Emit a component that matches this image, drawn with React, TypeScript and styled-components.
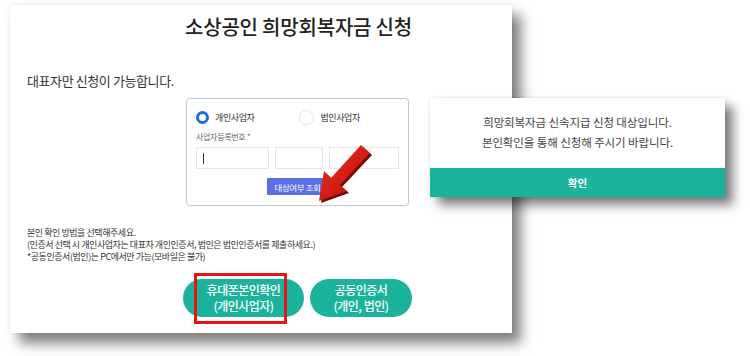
import React from "react";
import styled, { createGlobalStyle } from "styled-components";

const Global = createGlobalStyle`
  html, body { margin: 0; padding: 0; background: #ffffff; }
  body { font-family: "Noto Sans CJK KR", "Noto Sans", sans-serif; width: 750px; height: 356px; overflow: hidden; }
  * { box-sizing: border-box; }
`;

const Stage = styled.div`
  position: relative;
  width: 750px;
  height: 356px;
  padding: 5px 0 0 10px;
`;

const Card = styled.div`
  position: relative;
  width: 502px;
  height: 328px;
  background: #fff;
  box-shadow: 0 -1px 4px rgba(0, 0, 0, 0.08), 9px 10px 12px rgba(0, 0, 0, 0.5);
  display: flex;
  flex-direction: column;
  padding: 0 0 0 17px;
`;

const Title = styled.h1`
  margin: 8px 0 0 158px;
  font-size: 20px;
  font-weight: 500;
  color: #222;
  line-height: 28px;
  letter-spacing: -0.2px;
`;

const Lead = styled.p`
  margin: 31px 0 0 0;
  font-size: 13px;
  color: #333;
  line-height: 18px;
  letter-spacing: -0.4px;
`;

const FormBox = styled.div`
  margin: 8px 0 0 159px;
  width: 223px;
  height: 108px;
  border: 1px solid #b9cbe3;
  border-radius: 4px;
  padding: 8px 9px 0 9px;
  display: flex;
  flex-direction: column;
`;

const RadioRow = styled.div`
  display: flex;
  align-items: center;
  height: 20px;
`;

const RadioItem = styled.label<{ $w: number }>`
  display: flex;
  align-items: center;
  gap: 6px;
  width: ${(p) => p.$w}px;
  font-size: 9px;
  color: #333;
  letter-spacing: -0.4px;
`;

const RadioDot = styled.span<{ $on?: boolean }>`
  display: inline-block;
  width: ${(p) => (p.$on ? 13 : 15)}px;
  height: ${(p) => (p.$on ? 13 : 15)}px;
  border-radius: 50%;
  background: #fff;
  border: ${(p) => (p.$on ? "3.5px solid #1c6ed8" : "1px solid #e4e4e4")};
`;

const FieldLabel = styled.div`
  margin-top: 4px;
  font-size: 8px;
  color: #666;
  letter-spacing: -0.3px;
  line-height: 12px;
  span { color: #e03030; }
`;

const InputRow = styled.div`
  display: flex;
  gap: 6px;
  margin-top: 4px;
`;

const Field = styled.div<{ $w: number }>`
  width: ${(p) => p.$w}px;
  height: 22px;
  border: 1px solid #e4e6ea;
  background: #fff;
  position: relative;
`;

const Caret = styled.span`
  position: absolute;
  left: 6px;
  top: 5px;
  width: 1px;
  height: 11px;
  background: #333;
`;

const CheckBtn = styled.button`
  align-self: center;
  margin: 9px 0 0 0;
  width: 62px;
  height: 17px;
  border: 0;
  border-radius: 1px;
  background: #5a6ee6;
  color: #fff;
  font-family: inherit;
  font-size: 8.5px;
  letter-spacing: -0.4px;
  padding: 0;
`;

const Notes = styled.div`
  margin-top: 21px;
  font-size: 9px;
  color: #333;
  line-height: 12px;
  letter-spacing: -0.45px;
`;

const Actions = styled.div`
  display: flex;
  gap: 6px;
  margin: 16px 0 0 156px;
  position: relative;
`;

const Pill = styled.button<{ $w: number }>`
  width: ${(p) => p.$w}px;
  height: 38px;
  border: 0;
  border-radius: 19px;
  background: #1bb39b;
  color: #fff;
  font-family: inherit;
  font-size: 12px;
  font-weight: 500;
  line-height: 16px;
  letter-spacing: -0.5px;
  padding: 0;
`;

const Highlight = styled.div`
  position: absolute;
  left: 11px;
  top: -6px;
  width: 93px;
  height: 51px;
  border: 3px solid #e51515;
  pointer-events: none;
`;

const Arrow = styled.svg`
  position: absolute;
  left: 300px;
  top: 136px;
`;

const Modal = styled.div`
  position: absolute;
  left: 430px;
  top: 98px;
  width: 295px;
  height: 99px;
  background: #fff;
  box-shadow: 0 0 3px rgba(0, 0, 0, 0.12), 8px 8px 10px rgba(0, 0, 0, 0.5);
  display: flex;
  flex-direction: column;
`;

const ModalText = styled.div`
  flex: 1;
  display: flex;
  flex-direction: column;
  align-items: center;
  justify-content: center;
  padding-bottom: 2px;
  font-size: 11.5px;
  color: #444;
  line-height: 20px;
  letter-spacing: -0.1px;
`;

const ModalBtn = styled.button`
  height: 29px;
  border: 0;
  background: #1bb39b;
  color: #fff;
  font-family: inherit;
  font-size: 10.5px;
  font-weight: 700;
  padding: 0;
`;

export default function App() {
  return (
    <>
      <Global />
      <Stage>
        <Card>
          <Title>소상공인 희망회복자금 신청</Title>
          <Lead>대표자만 신청이 가능합니다.</Lead>
          <FormBox>
            <RadioRow>
              <RadioItem $w={104}>
                <RadioDot $on />
                개인사업자
              </RadioItem>
              <RadioItem $w={100}>
                <RadioDot />
                법인사업자
              </RadioItem>
            </RadioRow>
            <FieldLabel>
              사업자등록번호 <span>*</span>
            </FieldLabel>
            <InputRow>
              <Field $w={73}>
                <Caret />
              </Field>
              <Field $w={49} />
              <Field $w={70} />
            </InputRow>
            <CheckBtn>대상여부 조회</CheckBtn>
          </FormBox>
          <Notes>
            본인 확인 방법을 선택해주세요.
            <br />
            (인증서 선택 시 개인사업자는 대표자 개인인증서, 법인은 법인인증서를 제출하세요.)
            <br />
            *공동인증서(법인)는 PC에서만 가능(모바일은 불가)
          </Notes>
          <Actions>
            <Pill $w={121}>
              휴대폰본인확인
              <br />
              (개인사업자)
            </Pill>
            <Pill $w={102}>
              공동인증서
              <br />
              (개인, 법인)
            </Pill>
            <Highlight />
          </Actions>
          <Arrow width="66" height="68" viewBox="0 0 66 68">
            <defs>
              <linearGradient id="ar" x1="0" y1="0" x2="1" y2="1">
                <stop offset="0" stopColor="#f23020" />
                <stop offset="1" stopColor="#b80c0c" />
              </linearGradient>
            </defs>
            <polygon
              points="9,60 37,50 30,44 60,12 51,4 21,37 14,30"
              fill="#760707"
              transform="translate(2,2)"
            />
            <polygon
              points="9,60 37,50 30,44 60,12 51,4 21,37 14,30"
              fill="url(#ar)"
            />
          </Arrow>
        </Card>
        <Modal>
          <ModalText>
            <div>희망회복자금 신속지급 신청 대상입니다.</div>
            <div>본인확인을 통해 신청해 주시기 바랍니다.</div>
          </ModalText>
          <ModalBtn>확인</ModalBtn>
        </Modal>
      </Stage>
    </>
  );
}
